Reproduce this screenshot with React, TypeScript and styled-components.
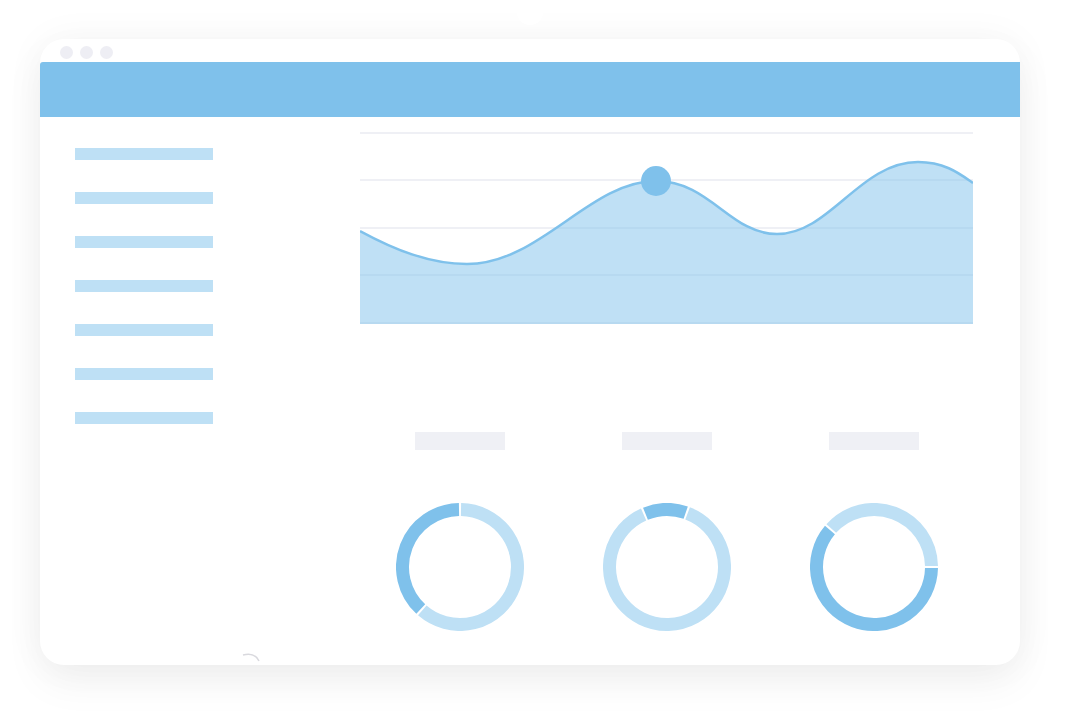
import styled, { createGlobalStyle } from "styled-components";

const BLUE = "#7fc1eb";
const LIGHT = "#bee0f5";
const GREY = "#eff0f5";

const GlobalStyle = createGlobalStyle`
  html, body {
    margin: 0;
    padding: 0;
    background: #ffffff;
    font-family: "Liberation Sans", Arial, sans-serif;
  }
`;

const polar = (cx: number, cy: number, r: number, deg: number) => {
  const a = (deg * Math.PI) / 180;
  return [cx + r * Math.sin(a), cy - r * Math.cos(a)];
};

const arcPath = (start: number, end: number) => {
  const [x1, y1] = polar(64, 64, 57.5, start);
  const [x2, y2] = polar(64, 64, 57.5, end);
  const sweep = (end - start + 360) % 360;
  const large = sweep > 180 ? 1 : 0;
  return `M${x1},${y1} A57.5,57.5 0 ${large} 1 ${x2},${y2}`;
};

type DonutProps = { from: number; to: number };

const Donut = ({ from, to }: DonutProps) => (
  <DonutSvg viewBox="0 0 128 128">
    <path d={arcPath(to + 1, from - 1 + 360)} stroke={LIGHT} strokeWidth={13} fill="none" />
    <path d={arcPath(from + 1, to - 1)} stroke={BLUE} strokeWidth={13} fill="none" />
  </DonutSvg>
);

const Chart = () => (
  <ChartSvg viewBox="0 0 613 193">
    {[1, 48, 96, 143, 191].map((y) => (
      <line key={y} x1={0} x2={613} y1={y} y2={y} stroke={GREY} strokeWidth={2} />
    ))}
    <path
      d="M0,99 C35,118 70,132 107,132 C180,132 230,49 296,49 C350,49 370,102 417,102 C470,102 500,30 558,30 C585,30 600,42 613,51 L613,192 L0,192 Z"
      fill={BLUE}
      fillOpacity={0.5}
    />
    <path
      d="M0,99 C35,118 70,132 107,132 C180,132 230,49 296,49 C350,49 370,102 417,102 C470,102 500,30 558,30 C585,30 600,42 613,51"
      fill="none"
      stroke={BLUE}
      strokeWidth={2.5}
    />
    <circle cx={296} cy={49} r={15} fill={BLUE} />
  </ChartSvg>
);

const donuts: DonutProps[] = [
  { from: 222, to: 360 },
  { from: 337, to: 380 },
  { from: 90, to: 311 },
];

export default function App() {
  return (
    <>
      <GlobalStyle />
      <Page>
        <Card>
          <Notch />
          <TitleBar>
            <Dot />
            <Dot />
            <Dot />
          </TitleBar>
          <Header />
          <Body>
            <Sidebar>
              {Array.from({ length: 7 }).map((_, i) => (
                <MenuBar key={i} />
              ))}
            </Sidebar>
            <Main>
              <Chart />
              <Stats>
                {donuts.map((d, i) => (
                  <Stat key={i}>
                    <Label />
                    <Donut from={d.from} to={d.to} />
                  </Stat>
                ))}
              </Stats>
            </Main>
          </Body>
          <Curl viewBox="0 0 18 10">
            <path d="M1,2 C8,0 14,2 17,8" stroke="#d9d9de" strokeWidth={1.5} fill="none" />
          </Curl>
        </Card>
      </Page>
    </>
  );
}

const Page = styled.div`
  width: 1066px;
  height: 718px;
  box-sizing: border-box;
  padding: 39px 46px 53px 40px;
  overflow: hidden;
`;

const Card = styled.div`
  position: relative;
  width: 980px;
  height: 626px;
  background: #ffffff;
  border-radius: 24px;
  box-shadow: 0 0 40px rgba(0, 0, 0, 0.045), 0 18px 40px rgba(0, 0, 0, 0.05);
  display: flex;
  flex-direction: column;
`;

const Notch = styled.div`
  position: absolute;
  top: -40px;
  left: 477px;
  width: 26px;
  height: 26px;
  border-radius: 50%;
  background: #ffffff;
`;

const TitleBar = styled.div`
  height: 23px;
  box-sizing: border-box;
  padding: 3px 0 0 20px;
  display: flex;
  align-items: center;
  gap: 7px;
`;

const Dot = styled.span`
  width: 13px;
  height: 13px;
  border-radius: 50%;
  background: #eeeef4;
`;

const Header = styled.div`
  height: 55px;
  background: ${BLUE};
  border-top-left-radius: 3px;
`;

const Body = styled.div`
  flex: 1;
  display: flex;
`;

const Sidebar = styled.div`
  width: 320px;
  box-sizing: border-box;
  padding: 31px 0 0 35px;
  display: flex;
  flex-direction: column;
  gap: 32px;
`;

const MenuBar = styled.div`
  width: 138px;
  height: 12px;
  background: ${LIGHT};
`;

const Main = styled.div`
  flex: 1;
  padding-top: 15px;
  display: flex;
  flex-direction: column;
`;

const ChartSvg = styled.svg`
  display: block;
  width: 613px;
  height: 193px;
`;

const Stats = styled.div`
  margin-top: 107px;
  margin-left: -4px;
  display: grid;
  grid-template-columns: repeat(3, 207px);
`;

const Stat = styled.div`
  display: flex;
  flex-direction: column;
  align-items: center;
  gap: 53px;
`;

const Label = styled.div`
  width: 90px;
  height: 18px;
  background: ${GREY};
`;

const DonutSvg = styled.svg`
  display: block;
  width: 128px;
  height: 128px;
`;

const Curl = styled.svg`
  position: absolute;
  left: 202px;
  bottom: 2px;
  width: 18px;
  height: 10px;
`;
